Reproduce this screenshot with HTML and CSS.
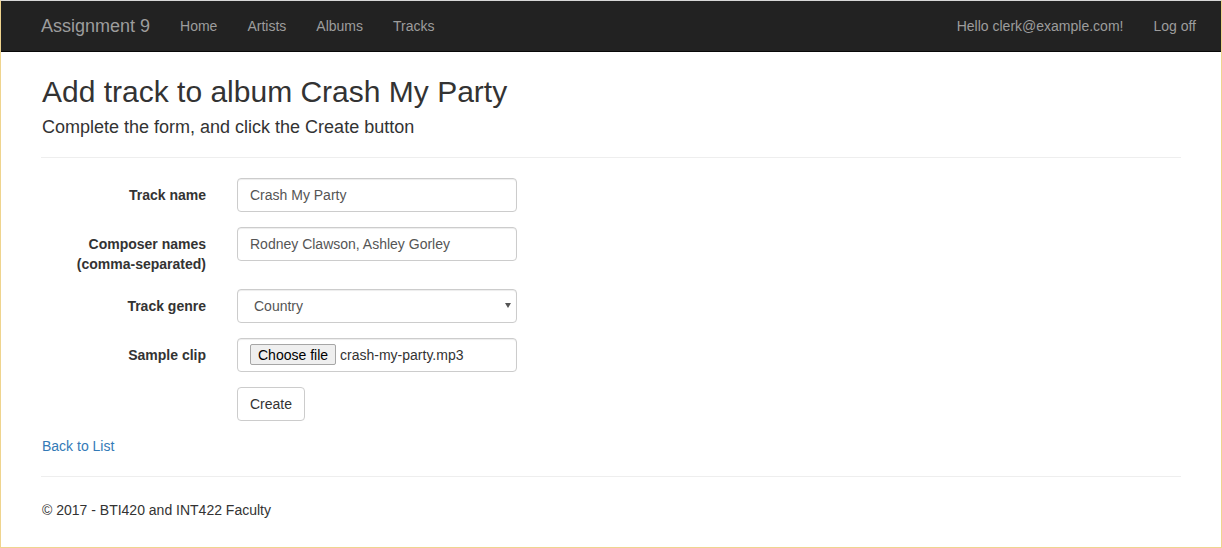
FILE: index.html
```html
<!DOCTYPE html>
<html lang="en">
<head>
<meta charset="utf-8">
<title>Create - Assignment 9</title>
<link rel="stylesheet" href="styles.css">
</head>
<body>
<div class="frame">
  <nav class="navbar">
    <div class="container nav-container">
      <a class="brand" href="#">Assignment 9</a>
      <ul class="nav">
        <li><a href="#">Home</a></li>
        <li><a href="#">Artists</a></li>
        <li><a href="#">Albums</a></li>
        <li><a href="#">Tracks</a></li>
      </ul>
      <ul class="nav nav-right">
        <li><a href="#">Hello clerk@example.com!</a></li>
        <li><a href="#">Log off</a></li>
      </ul>
    </div>
  </nav>
  <main class="container body-content">
    <h2 class="title">Add track to album Crash My Party</h2>
    <h4 class="subtitle">Complete the form, and click the Create button</h4>
    <hr class="rule top-rule">
    <form class="form-horizontal">
      <div class="form-group">
        <label class="control-label" for="name">Track name</label>
        <div class="control-col">
          <input class="form-control" id="name" type="text" value="Crash My Party">
        </div>
      </div>
      <div class="form-group">
        <label class="control-label" for="composers">Composer names (comma-separated)</label>
        <div class="control-col">
          <input class="form-control" id="composers" type="text" value="Rodney Clawson, Ashley Gorley">
        </div>
      </div>
      <div class="form-group">
        <label class="control-label" for="genre">Track genre</label>
        <div class="control-col">
          <div class="select-wrap">
            <select class="form-control select-control" id="genre">
              <option>Country</option>
            </select>
          </div>
        </div>
      </div>
      <div class="form-group">
        <label class="control-label">Sample clip</label>
        <div class="control-col">
          <div class="form-control file-control">
            <span class="file-button">Choose file</span>
            <span class="file-name">crash-my-party.mp3</span>
          </div>
        </div>
      </div>
      <div class="form-group">
        <div class="control-label"></div>
        <div class="control-col">
          <button class="btn" type="button">Create</button>
        </div>
      </div>
    </form>
    <div class="back"><a href="#">Back to List</a></div>
    <hr class="rule footer-rule">
    <footer class="footer">
      <p>&copy; 2017 - BTI420 and INT422 Faculty</p>
    </footer>
  </main>
</div>
</body>
</html>
```

FILE: styles.css
```css
* {
  box-sizing: border-box;
}

html, body {
  margin: 0;
  padding: 0;
  background: #ffffff;
}

body {
  font-family: "Liberation Sans", Arial, sans-serif;
  font-size: 14px;
  line-height: 20px;
  color: #333333;
}

.frame {
  width: 1222px;
  height: 548px;
  border-top: 1px solid #d8d8d8;
  border-left: 1px solid #efd48e;
  border-right: 1px solid #efd48e;
  border-bottom: 1px solid #efd48e;
  overflow: hidden;
  background: #ffffff;
}

.container {
  width: 1170px;
  margin: 0 auto;
  padding: 0 15px;
}

/* Navbar */
.navbar {
  background: #222222;
  border-bottom: 1px solid #080808;
  height: 51px;
}

.nav-container {
  display: flex;
  align-items: flex-start;
}

.brand {
  display: block;
  margin-left: -15px;
  padding: 15px;
  height: 50px;
  font-size: 18px;
  line-height: 20px;
  color: #9d9d9d;
  text-decoration: none;
}

.nav {
  display: flex;
  list-style: none;
  margin: 0;
  padding: 0;
}

.nav a {
  display: block;
  padding: 15px;
  line-height: 20px;
  color: #9d9d9d;
  text-decoration: none;
}

.nav-right {
  margin-left: auto;
  margin-right: -30px;
}

/* Content */
.body-content {
  padding-top: 2px;
  padding-bottom: 20px;
}

.title,
.subtitle,
.back,
.footer {
  padding-left: 1px;
}

.title {
  margin: 21px 0 10px;
  font-size: 30px;
  line-height: 33px;
  font-weight: 500;
  color: #333333;
}

.subtitle {
  margin: 10px 0 10px;
  font-size: 18px;
  line-height: 19.8px;
  font-weight: 500;
  color: #333333;
}

.rule {
  margin: 20px 0;
  border: 0;
  border-top: 1px solid #eeeeee;
  height: 0;
}

.top-rule {
  margin-top: 19px;
}

.form-horizontal {
  margin: 0 -15px;
}

.form-group {
  display: flex;
  align-items: flex-start;
  margin-bottom: 15px;
}

.control-label {
  width: 195px;
  flex: 0 0 195px;
  padding: 7px 15px 0;
  text-align: right;
  font-weight: bold;
  color: #333333;
}

.control-col {
  flex: 1;
  padding: 0 15px;
}

.form-control {
  display: block;
  width: 280px;
  height: 34px;
  padding: 6px 12px;
  font-family: "Liberation Sans", Arial, sans-serif;
  font-size: 14px;
  line-height: 20px;
  color: #555555;
  background: #ffffff;
  border: 1px solid #cccccc;
  border-radius: 4px;
  box-shadow: inset 0 1px 1px rgba(0, 0, 0, 0.075);
  margin-left: 1px;
}

.select-wrap {
  position: relative;
  width: 281px;
}

.select-control {
  appearance: none;
  -webkit-appearance: none;
  padding-left: 16px;
}

.select-wrap::after {
  content: "";
  position: absolute;
  left: 269px;
  top: 14px;
  width: 0;
  height: 0;
  border-left: 3px solid transparent;
  border-right: 3px solid transparent;
  border-top: 5px solid #555555;
}

.file-control {
  display: flex;
  align-items: center;
  gap: 4px;
  padding: 6px 12px;
  color: #333333;
}

.file-button {
  display: inline-block;
  height: 21px;
  padding: 0 7px;
  line-height: 20px;
  font-size: 14px;
  color: #000000;
  background: #efefef;
  border: 1px solid #a6a6a6;
  border-radius: 2px;
}

.file-name {
  font-size: 14px;
  color: #333333;
}

.btn {
  display: inline-block;
  height: 34px;
  padding: 6px 12px;
  margin-left: 1px;
  font-family: "Liberation Sans", Arial, sans-serif;
  font-size: 14px;
  line-height: 20px;
  color: #333333;
  background: #ffffff;
  border: 1px solid #cccccc;
  border-radius: 4px;
}

.back {
  line-height: 20px;
}

.back a {
  color: #337ab7;
  text-decoration: none;
}

.footer {
  padding-top: 3px;
}

.footer p {
  margin: 0 0 10px;
}
```
